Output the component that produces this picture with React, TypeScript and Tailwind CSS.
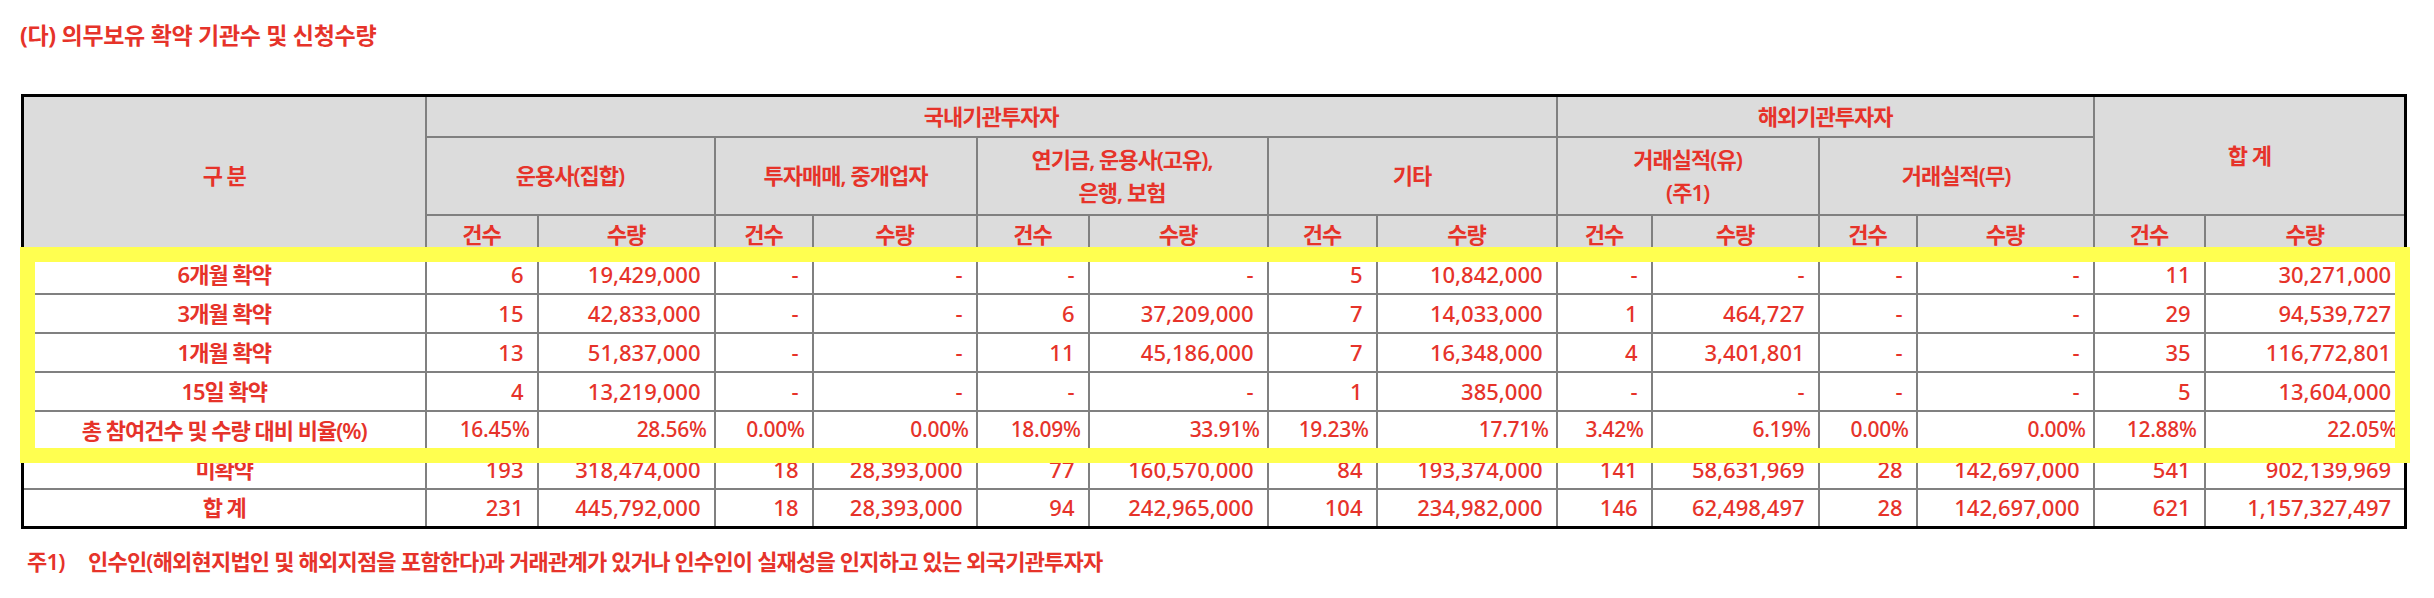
const RED = 'text-[#e6332a]';

type Row = { label: string; cells: string[]; pct?: boolean };

const rows: Row[] = [
  { label: '6개월 확약', cells: ['6', '19,429,000', '-', '-', '-', '-', '5', '10,842,000', '-', '-', '-', '-', '11', '30,271,000'] },
  { label: '3개월 확약', cells: ['15', '42,833,000', '-', '-', '6', '37,209,000', '7', '14,033,000', '1', '464,727', '-', '-', '29', '94,539,727'] },
  { label: '1개월 확약', cells: ['13', '51,837,000', '-', '-', '11', '45,186,000', '7', '16,348,000', '4', '3,401,801', '-', '-', '35', '116,772,801'] },
  { label: '15일 확약', cells: ['4', '13,219,000', '-', '-', '-', '-', '1', '385,000', '-', '-', '-', '-', '5', '13,604,000'] },
  {
    label: '총 참여건수 및 수량 대비 비율(%)',
    pct: true,
    cells: ['16.45%', '28.56%', '0.00%', '0.00%', '18.09%', '33.91%', '19.23%', '17.71%', '3.42%', '6.19%', '0.00%', '0.00%', '12.88%', '22.05%'],
  },
  { label: '미확약', cells: ['193', '318,474,000', '18', '28,393,000', '77', '160,570,000', '84', '193,374,000', '141', '58,631,969', '28', '142,697,000', '541', '902,139,969'] },
  { label: '합 계', cells: ['231', '445,792,000', '18', '28,393,000', '94', '242,965,000', '104', '234,982,000', '146', '62,498,497', '28', '142,697,000', '621', '1,157,327,497'] },
];

const colWidths = [403, 112, 177, 98, 164, 112, 179, 109, 180, 95, 167, 98, 177, 111, 201];

const th = 'border-2 border-[#808080] bg-[#dcdcdc] text-center align-middle font-semibold text-[22px] tracking-[-1px]';
const td = 'border-2 border-[#808080] bg-white align-middle';

export default function App() {
  return (
    <div className="w-[2434px] h-[598px] bg-white overflow-hidden font-['Noto_Sans','Noto_Sans_CJK_KR',sans-serif]">
      <div className={`pt-[18px] pl-[20px] text-[23px] leading-[34px] font-bold tracking-[-0.3px] ${RED}`}>
        (다) 의무보유 확약 기관수 및 신청수량
      </div>

      <div className="relative ml-[21px] mt-[42px] w-[2384px]">
        <table className={`table-fixed border-collapse border-[3px] border-black w-[2384px] ${RED}`}>
          <colgroup>
            {colWidths.map((w, i) => (
              <col key={i} style={{ width: w }} />
            ))}
          </colgroup>
          <thead>
            <tr className="h-[41px]">
              <th rowSpan={3} className={th}>구 분</th>
              <th colSpan={8} className={th}>국내기관투자자</th>
              <th colSpan={4} className={th}>해외기관투자자</th>
              <th colSpan={2} rowSpan={2} className={th}>합 계</th>
            </tr>
            <tr className="h-[78px]">
              <th colSpan={2} className={th}>운용사(집합)</th>
              <th colSpan={2} className={th}>투자매매, 중개업자</th>
              <th colSpan={2} className={`${th} leading-[33px]`}>
                연기금, 운용사(고유),
                <br />
                은행, 보험
              </th>
              <th colSpan={2} className={th}>기타</th>
              <th colSpan={2} className={`${th} leading-[33px]`}>
                거래실적(유)
                <br />
                (주1)
              </th>
              <th colSpan={2} className={th}>거래실적(무)</th>
            </tr>
            <tr className="h-[40px]">
              {Array.from({ length: 7 }).flatMap((_, i) => [
                <th key={`c${i}`} className={th}>건수</th>,
                <th key={`q${i}`} className={th}>수량</th>,
              ])}
            </tr>
          </thead>
          <tbody>
            {rows.map((r) => (
              <tr key={r.label} className="h-[39px]">
                <td className={`${td} text-center font-semibold text-[22px] tracking-[-1px]`}>{r.label}</td>
                {r.cells.map((c, i) => (
                  <td
                    key={i}
                    className={`${td} text-right font-medium ${
                      r.pct ? 'pr-[7px] text-[21px] tracking-[-0.3px]' : 'pr-[13px] text-[22px]'
                    }`}
                  >
                    {c}
                  </td>
                ))}
              </tr>
            ))}
          </tbody>
        </table>

        {/* highlight box over the confirmed rows */}
        <div className="absolute left-[-1px] top-[153px] w-[2390px] h-[216px] border-[15px] border-[#ffff50] pointer-events-none" />
      </div>

      <div className={`flex mt-[16px] text-[22px] leading-[32px] tracking-[-0.8px] font-semibold ${RED}`}>
        <span className="pl-[27px] w-[88px]">주1)</span>
        <span>인수인(해외현지법인 및 해외지점을 포함한다)과 거래관계가 있거나 인수인이 실재성을 인지하고 있는 외국기관투자자</span>
      </div>
    </div>
  );
}
